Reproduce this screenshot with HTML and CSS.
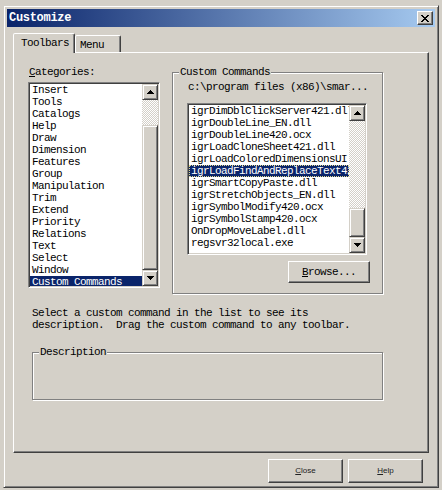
FILE: index.html
```html
<!DOCTYPE html>
<html lang="en">
<head>
  <meta charset="UTF-8" />
  <title>Customize</title>
  <link rel="stylesheet" href="styles.css">
</head>
<body>
  <div class="window">
    <div class="titlebar">
      <span class="title">Customize</span>
      <button class="title-close" aria-label="Close">
        <svg width="8" height="7" viewBox="0 0 8 7" shape-rendering="crispEdges">
          <path d="M0 0h2v1h1v1h2V1h1V0h2v1H7v1H6v1H5v1h1v1h1v1h1v1H6V6H5V5H3v1H2v1H0V6h1V5h1V4h1V3H2V2H1V1H0z" fill="#000"/>
        </svg>
      </button>
    </div>

    <div class="tabs">
      <div class="tab active">Toolbars</div>
      <div class="tab">Menu</div>
    </div>

    <div class="tab-panel">
      <div class="top-row">
        <div class="categories">
          <label class="field-label"><u>C</u>ategories:</label>
          <div class="listbox cat-list">
            <ul class="items">
              <li>Insert</li>
              <li>Tools</li>
              <li>Catalogs</li>
              <li>Help</li>
              <li>Draw</li>
              <li>Dimension</li>
              <li>Features</li>
              <li>Group</li>
              <li>Manipulation</li>
              <li>Trim</li>
              <li>Extend</li>
              <li>Priority</li>
              <li>Relations</li>
              <li>Text</li>
              <li>Select</li>
              <li>Window</li>
              <li class="selected">Custom Commands</li>
            </ul>
            <div class="scrollbar">
              <span class="sb-btn"><svg width="7" height="4" viewBox="0 0 7 4" shape-rendering="crispEdges"><path d="M3 0h1v1h1v1h1v1h1v1H0V3h1V2h1V1h1z"/></svg></span>
              <span class="sb-track"><span class="sb-thumb"></span></span>
              <span class="sb-btn"><svg width="7" height="4" viewBox="0 0 7 4" shape-rendering="crispEdges"><path d="M0 0h7v1H6v1H5v1H4v1H3V3H2V2H1V1H0z"/></svg></span>
            </div>
          </div>
        </div>

        <fieldset class="group commands">
          <legend>Custom Commands</legend>
          <div class="group-body">
            <div class="path">c:\program files (x86)\smar...</div>
            <div class="listbox cmd-list">
              <ul class="items">
                <li>igrDimDblClickServer421.dll</li>
                <li>igrDoubleLine_EN.dll</li>
                <li>igrDoubleLine420.ocx</li>
                <li>igrLoadCloneSheet421.dll</li>
                <li>igrLoadColoredDimensionsUI.dll</li>
                <li class="selected focused">igrLoadFindAndReplaceText421.dll</li>
                <li>igrSmartCopyPaste.dll</li>
                <li>igrStretchObjects_EN.dll</li>
                <li>igrSymbolModify420.ocx</li>
                <li>igrSymbolStamp420.ocx</li>
                <li>OnDropMoveLabel.dll</li>
                <li>regsvr32local.exe</li>
              </ul>
              <div class="scrollbar">
                <span class="sb-btn"><svg width="7" height="4" viewBox="0 0 7 4" shape-rendering="crispEdges"><path d="M3 0h1v1h1v1h1v1h1v1H0V3h1V2h1V1h1z"/></svg></span>
                <span class="sb-track"><span class="sb-thumb"></span></span>
                <span class="sb-btn"><svg width="7" height="4" viewBox="0 0 7 4" shape-rendering="crispEdges"><path d="M0 0h7v1H6v1H5v1H4v1H3V3H2V2H1V1H0z"/></svg></span>
              </div>
            </div>
            <button class="btn browse"><u>B</u>rowse...</button>
          </div>
        </fieldset>
      </div>

      <p class="hint">Select a custom command in the list to see its<br>description.&nbsp; Drag the custom command to any toolbar.</p>

      <fieldset class="group description">
        <legend>Description</legend>
        <div class="group-body"></div>
      </fieldset>
    </div>

    <div class="actions">
      <button class="btn dialog-btn"><u>C</u>lose</button>
      <button class="btn dialog-btn"><u>H</u>elp</button>
    </div>
  </div>
</body>
</html>
```

FILE: styles.css
```css
/* classic 3D face colours */
:root {
  --face: #d4d0c8;
  --light: #ffffff;
  --shadow: #808080;
  --dark: #404040;
  --select: #0a246a;
}

body {
  margin: 0;
  padding: 5px 0 0 3px;
  background: var(--face);
  font-family: "Liberation Mono", "DejaVu Sans Mono", monospace;
  font-size: 11px;
  letter-spacing: -0.6px;
  line-height: 12px;
  color: #000;
}

button {
  font: inherit;
  letter-spacing: inherit;
  color: inherit;
  padding: 0;
}

.window {
  width: 436px;
  height: 483px;
  box-sizing: border-box;
  border: 1px solid;
  border-color: var(--face) var(--dark) var(--dark) var(--face);
  box-shadow: inset 1px 1px var(--light), inset -1px -1px var(--shadow);
  padding: 3px;
  background: var(--face);
}

.titlebar {
  height: 18px;
  display: flex;
  align-items: center;
  justify-content: space-between;
  padding: 0 2px;
  background: linear-gradient(to right, #0a246a, #a6caf0);
}

.title {
  color: #fff;
  font-size: 12px;
  font-weight: bold;
  letter-spacing: -0.3px;
}

.title-close {
  width: 16px;
  height: 14px;
  box-sizing: border-box;
  display: flex;
  align-items: center;
  justify-content: center;
  background: var(--face);
  border: 1px solid;
  border-color: var(--light) var(--dark) var(--dark) var(--light);
  box-shadow: inset -1px -1px var(--shadow);
}

/* tab strip */
.tabs {
  display: flex;
  align-items: flex-end;
  height: 19px;
  margin: 6px 0 0 6px;
  position: relative;
  z-index: 1;
}

.tab {
  box-sizing: border-box;
  height: 17px;
  padding: 3px 0 0 4px;
  width: 46px;
  background: var(--face);
  border: 1px solid;
  border-bottom: none;
  border-color: var(--light) var(--dark) transparent var(--light);
  border-radius: 2px 2px 0 0;
  box-shadow: inset -1px 0 var(--shadow);
}

.tab.active {
  width: 62px;
  height: 20px;
  margin-bottom: -1px;
  padding-left: 7px;
}

.tab-panel {
  width: 416px;
  height: 401px;
  box-sizing: border-box;
  margin-left: 6px;
  border: 1px solid;
  border-color: var(--light) var(--dark) var(--dark) var(--light);
  box-shadow: inset -1px -1px var(--shadow);
}

.top-row {
  display: flex;
  align-items: flex-start;
  padding: 13px 0 0 14px;
}

.field-label {
  display: block;
  padding-left: 1px;
}

/* list boxes */
.listbox {
  display: flex;
  box-sizing: border-box;
  border: 1px solid;
  border-color: var(--shadow) var(--light) var(--light) var(--shadow);
  box-shadow: inset 1px 1px var(--dark), inset -1px -1px var(--face);
  padding: 1px;
  background: #fff;
}

.cat-list {
  width: 132px;
  height: 206px;
  margin-top: 4px;
}

.cmd-list {
  width: 180px;
  height: 152px;
  margin-top: 10px;
}

.items {
  flex: 1;
  min-width: 0;
  margin: 0;
  padding: 0;
  list-style: none;
  overflow: hidden;
}

.items li {
  height: 12px;
  padding-left: 2px;
  white-space: nowrap;
  overflow: hidden;
}

.items li.selected {
  background: var(--select);
  color: #fff;
}

.items li.focused {
  outline: 1px dotted #e0d890;
  outline-offset: -1px;
}

.scrollbar {
  width: 16px;
  display: flex;
  flex-direction: column;
}

.sb-btn {
  height: 16px;
  box-sizing: border-box;
  display: flex;
  align-items: center;
  justify-content: center;
  background: var(--face);
  border: 1px solid;
  border-color: var(--face) var(--dark) var(--dark) var(--face);
  box-shadow: inset 1px 1px var(--light), inset -1px -1px var(--shadow);
}

.sb-track {
  flex: 1;
  display: flex;
  flex-direction: column;
  background: repeating-conic-gradient(var(--face) 0 25%, #fff 0 50%) 0 0 / 2px 2px;
}

.sb-thumb {
  box-sizing: border-box;
  background: var(--face);
  border: 1px solid;
  border-color: var(--face) var(--dark) var(--dark) var(--face);
  box-shadow: inset 1px 1px var(--light), inset -1px -1px var(--shadow);
}

.cat-list .sb-thumb {
  margin-top: 25px;
  height: 145px;
}

.cmd-list .sb-thumb {
  margin-top: 87px;
  height: 29px;
}

/* etched group boxes */
.group {
  margin: 0;
  padding: 0;
  min-width: 0;
  border: 1px solid var(--shadow);
  box-shadow: 1px 1px var(--light), inset 1px 1px var(--light);
}

.group legend {
  margin-left: 6px;
  padding: 0 1px;
  background: var(--face);
  line-height: 12px;
}

.commands {
  width: 209px;
  margin-left: 12px;
}

.commands .group-body {
  display: flex;
  flex-direction: column;
  padding: 3px 12px 10px 14px;
}

.path {
  padding-left: 1px;
}

.btn {
  background: var(--face);
  box-sizing: border-box;
  border: 1px solid;
  border-color: var(--light) var(--dark) var(--dark) var(--light);
  box-shadow: inset -1px -1px var(--shadow);
}

.browse {
  align-self: flex-end;
  width: 82px;
  height: 22px;
  margin-top: 6px;
}

.hint {
  margin: 13px 0 0 18px;
  white-space: nowrap;
}

.description {
  width: 349px;
  margin: 15px 0 0 18px;
}

.description .group-body {
  height: 41px;
}

.actions {
  display: flex;
  justify-content: flex-end;
  gap: 5px;
  margin: 6px 12px 0 0;
}

.dialog-btn {
  width: 75px;
  height: 24px;
  font-family: "Liberation Sans", Arial, sans-serif;
  font-size: 8px;
  letter-spacing: 0;
  color: #222;
}
```
